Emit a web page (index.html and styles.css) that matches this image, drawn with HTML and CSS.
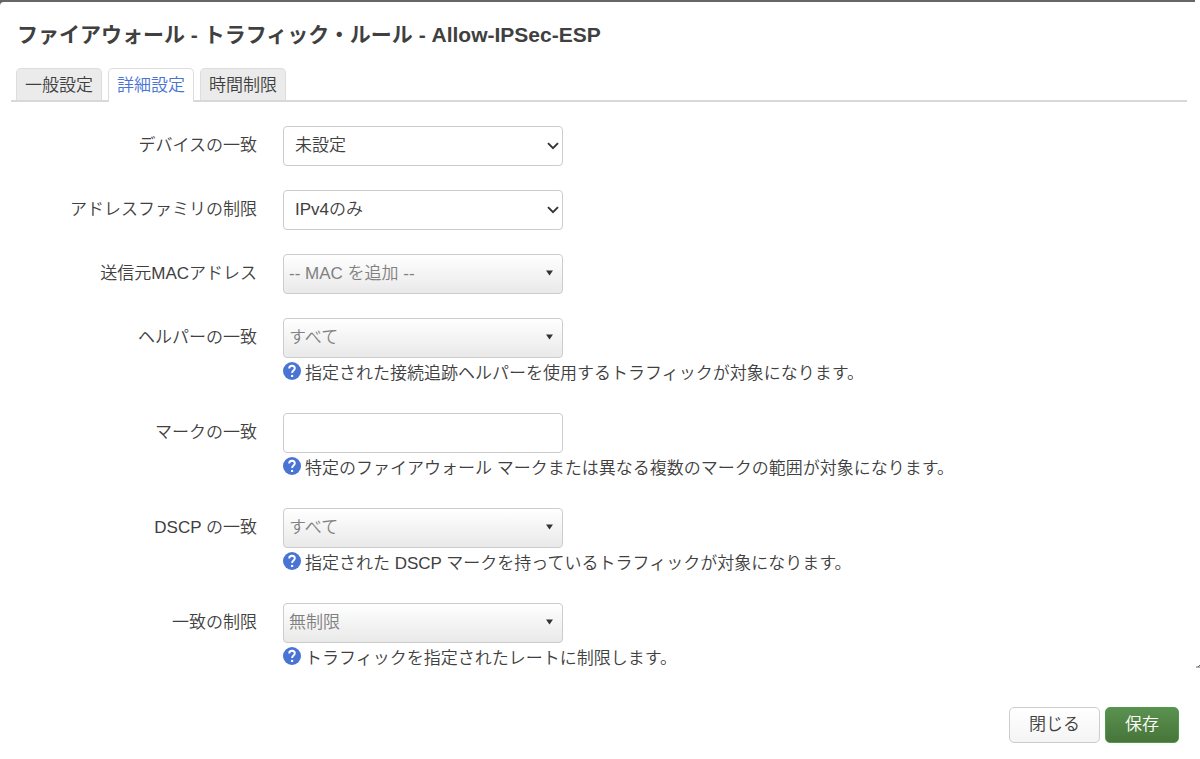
FILE: index.html
```html
<!DOCTYPE html>
<html lang="ja">
<head>
<meta charset="utf-8">
<meta name="viewport" content="width=device-width, initial-scale=1">
<title>ファイアウォール - トラフィック・ルール</title>
<link rel="stylesheet" href="styles.css">
</head>
<body>
<svg class="sprites" aria-hidden="true">
  <symbol id="chevron" viewBox="0 0 12 8"><path d="M1 1.2 6 6.2l5-5" fill="none" stroke="#333" stroke-width="1.9"/></symbol>
  <symbol id="caret" viewBox="0 0 7 6"><path d="M0 .4h7L3.500 5.600z" fill="#333"/></symbol>
  <symbol id="help" viewBox="0 0 18 18"><circle cx="9" cy="9" r="9" fill="#4a74d4"/><path d="M6.200 6.500C6.200 4.600 7.400 3.700 9 3.700s2.800 1 2.800 2.600c0 2.200-2.700 2.300-2.700 4.600" fill="none" stroke="#fff" stroke-width="1.900"/><circle cx="9.100" cy="13.900" r="1.200" fill="#fff"/></symbol>
</svg>
<main class="modal">
  <h1 class="title">ファイアウォール - トラフィック・ルール - Allow-IPSec-ESP</h1>
  <nav class="tabs">
    <a class="tab" href="#general">一般設定</a>
    <a class="tab tab-active" href="#advanced" aria-current="page">詳細設定</a>
    <a class="tab" href="#time">時間制限</a>
  </nav>
  <form class="form">
    <div class="row">
      <label class="label" for="device">デバイスの一致</label>
      <div class="field">
        <div class="control">
          <select class="input" id="device"><option>未設定</option></select>
          <svg class="chevron" aria-hidden="true"><use href="#chevron"/></svg>
        </div>
      </div>
    </div>
    <div class="row">
      <label class="label" for="family">アドレスファミリの制限</label>
      <div class="field">
        <div class="control">
          <select class="input" id="family"><option>IPv4のみ</option></select>
          <svg class="chevron" aria-hidden="true"><use href="#chevron"/></svg>
        </div>
      </div>
    </div>
    <div class="row">
      <label class="label" for="mac">送信元MACアドレス</label>
      <div class="field">
        <div class="control">
          <select class="input dropdown" id="mac"><option>-- MAC を追加 --</option></select>
          <svg class="caret" aria-hidden="true"><use href="#caret"/></svg>
        </div>
      </div>
    </div>
    <div class="row">
      <label class="label" for="helper">ヘルパーの一致</label>
      <div class="field">
        <div class="control">
          <select class="input dropdown" id="helper"><option>すべて</option></select>
          <svg class="caret" aria-hidden="true"><use href="#caret"/></svg>
        </div>
        <p class="hint"><svg class="help" aria-hidden="true"><use href="#help"/></svg><span>指定された接続追跡ヘルパーを使用するトラフィックが対象になります。</span></p>
      </div>
    </div>
    <div class="row">
      <label class="label" for="mark">マークの一致</label>
      <div class="field">
        <div class="control">
          <input class="input" id="mark" type="text">
        </div>
        <p class="hint"><svg class="help" aria-hidden="true"><use href="#help"/></svg><span>特定のファイアウォール マークまたは異なる複数のマークの範囲が対象になります。</span></p>
      </div>
    </div>
    <div class="row">
      <label class="label" for="dscp">DSCP の一致</label>
      <div class="field">
        <div class="control">
          <select class="input dropdown" id="dscp"><option>すべて</option></select>
          <svg class="caret" aria-hidden="true"><use href="#caret"/></svg>
        </div>
        <p class="hint"><svg class="help" aria-hidden="true"><use href="#help"/></svg><span>指定された DSCP マークを持っているトラフィックが対象になります。</span></p>
      </div>
    </div>
    <div class="row">
      <label class="label" for="limit">一致の制限</label>
      <div class="field">
        <div class="control">
          <select class="input dropdown" id="limit"><option>無制限</option></select>
          <svg class="caret" aria-hidden="true"><use href="#caret"/></svg>
        </div>
        <p class="hint"><svg class="help" aria-hidden="true"><use href="#help"/></svg><span>トラフィックを指定されたレートに制限します。</span></p>
      </div>
    </div>
    <div class="actions">
      <button class="button" type="button">閉じる</button>
      <button class="button button-save" type="submit">保存</button>
    </div>
  </form>
  <svg class="edge" viewBox="0 0 4 4" aria-hidden="true"><path d="M0 3h4M2 3l2-2" stroke="#666" fill="none"/></svg>
</main>
</body>
</html>
```
FILE: styles.css
```css
* {
  box-sizing: border-box;
}

body {
  margin: 0;
  background: linear-gradient(to right, #666 calc(100% - 5px), #fff 0) 0 0 / 100% 8px no-repeat #fff;
  color: #404040;
  font: 350 17px/24px "Liberation Sans", "Noto Sans CJK JP", sans-serif;
  padding-top: 2px;
}

.sprites {
  position: absolute;
  width: 0;
  height: 0;
}

.modal {
  position: relative;
  background: #fff;
  border-radius: 4px 0 0 0;
  padding: 16px 13px 16px 11px;
}

.title {
  margin: 0 6px 16px;
  font-size: 21px;
  font-weight: 700;
  line-height: 34px;
}

.tabs {
  display: flex;
  gap: 6px;
  padding-left: 5px;
  border-bottom: 2px solid #d8d8d8;
}

.tab {
  height: 32px;
  padding: 0 8px;
  border: 1px solid #ddd;
  border-bottom: 0;
  border-radius: 5px 5px 0 0;
  background: #ebebeb;
  color: #404040;
  line-height: 34px;
  text-decoration: none;
}

.tab-active {
  height: 34px;
  margin-bottom: -2px;
  background: #fff;
  color: #4a74d4;
}

.form {
  display: flex;
  flex-direction: column;
  gap: 24px;
  padding: 24px 8px 0 5px;
}

.row {
  display: flex;
  gap: 26px;
}

.label {
  flex: 0 0 241px;
  text-align: right;
  line-height: 40px;
}

.field {
  flex: 1;
}

.control {
  position: relative;
  max-width: 280px;
}

.input {
  display: block;
  width: 100%;
  height: 40px;
  padding: 0 11px;
  border: 1px solid #ccc;
  border-radius: 4px;
  appearance: none;
  background: #fff;
  color: #404040;
  font: inherit;
}

.dropdown {
  padding: 0 5px;
  background: linear-gradient(#fff, #e9e9e9);
  color: #808080;
}

.chevron,
.caret {
  position: absolute;
  pointer-events: none;
}

.chevron {
  top: 16px;
  right: 4px;
  width: 12px;
  height: 8px;
}

.caret {
  top: 16px;
  right: 10px;
  width: 7px;
  height: 6px;
}

.hint {
  display: flex;
  gap: 4px;
  margin: 0;
  padding-top: 1px;
  line-height: 30px;
}

.help {
  flex: none;
  width: 18px;
  height: 18px;
  margin-top: 3px;
}

.actions {
  display: flex;
  justify-content: flex-end;
  gap: 5px;
  padding-top: 9px;
}

.button {
  height: 36px;
  padding: 0 19px;
  border: 1px solid #ccc;
  border-radius: 5px;
  background: linear-gradient(#fff, #f4f4f4);
  color: #404040;
  font: inherit;
}

.button-save {
  border-color: #4f9a4a;
  background: linear-gradient(#5a9150, #48753a);
  color: #fff;
}

.edge {
  position: absolute;
  right: 0;
  bottom: 91px;
  width: 4px;
  height: 4px;
}
```
